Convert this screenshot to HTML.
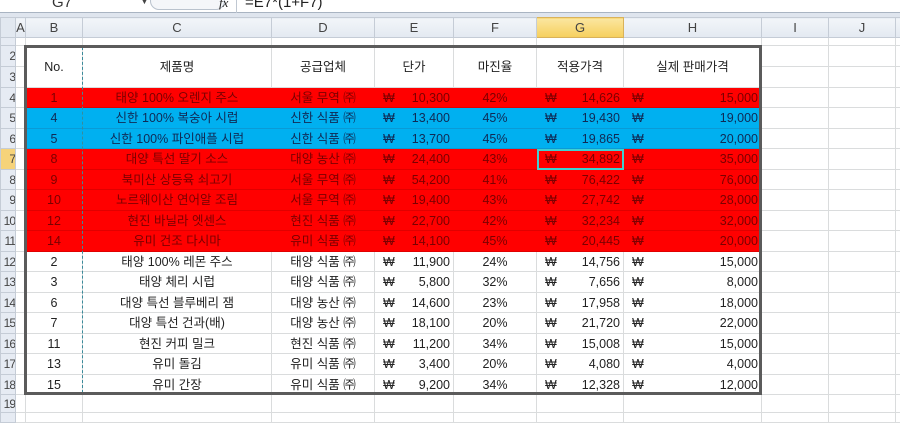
<!DOCTYPE html>
<html><head><meta charset="utf-8"><style>
*{margin:0;padding:0;box-sizing:border-box}
body{width:900px;height:418px;overflow:hidden;background:#fff;position:relative;font-family:"Liberation Sans","Noto Sans CJK KR",sans-serif;font-size:12.5px;color:#222}
.fb{position:absolute;left:0;top:0;width:900px;height:13px;background:#fff;border-bottom:1px solid #a9b4c2}
.band{position:absolute;left:0;top:13px;width:900px;height:4px;background:#dfe5ee}
table{position:absolute;left:0;top:17px;border-collapse:collapse;table-layout:fixed;width:915px}
td{border:1px solid #dadcdd;white-space:nowrap;overflow:hidden;padding:0 3px;line-height:14px}
.ch td{background:linear-gradient(#f2f5f9,#e3e9f1);border-color:#c5ccd6;text-align:center;color:#444;font-size:13px;padding:0}
td.rh{background:#e6ebf3;border-color:#c5ccd6;color:#444;text-align:right;padding:0;font-size:12px;letter-spacing:-1px}
.c{text-align:center}.r{text-align:right}
.red td.d{background:#ff0000;color:#7a0000;border-color:#ff0000;border-bottom-color:#e00000}
.blu td.d{background:#00b0f0;color:#102a55;border-color:#00b0f0;border-bottom-color:#0a9ad6}
.w{float:left;padding-left:5px}
.box{position:absolute;left:24px;top:45px;width:738px;height:350px;border:3px solid #5b5b5b;pointer-events:none}
.dash{position:absolute;left:82px;top:47px;height:346px;border-left:1px dashed #3a8a9a}
</style></head><body>
<div class="fb">
<span style="position:absolute;left:52px;top:-6px;font-size:15px;color:#333">G7</span>
<span style="position:absolute;left:140px;top:-4px;font-size:9px;color:#444">▼</span>
<div style="position:absolute;left:150px;top:-8px;width:75px;height:18px;border:1px solid #b9c2cd;border-radius:9px;background:#f4f6f9"></div>
<span style="position:absolute;left:219px;top:-5px;font-size:13px;font-style:italic;font-family:'Liberation Serif',serif">fx</span>
<div style="position:absolute;left:236px;top:0;height:13px;border-left:1px solid #c0c8d2"></div>
<span style="position:absolute;left:245px;top:-6px;font-size:15px;color:#222">=E7*(1+F7)</span>
</div>
<div class="band"></div>
<table>
<colgroup><col style="width:15px"><col style="width:10px"><col style="width:57px"><col style="width:189px"><col style="width:103px"><col style="width:79px"><col style="width:83px"><col style="width:87px"><col style="width:138px"><col style="width:67px"><col style="width:67px"><col style="width:20px"></colgroup>
<tr class="ch" style="height:20px"><td style="background:#e2e8f0"></td><td>A</td><td>B</td><td>C</td><td>D</td><td>E</td><td>F</td><td style="background:linear-gradient(#fbe6a0,#f6cf5d);border-color:#d9b25a">G</td><td>H</td><td>I</td><td>J</td><td></td></tr>
<tr style="height:8px"><td class="rh"></td><td></td><td></td><td></td><td></td><td></td><td></td><td></td><td></td><td></td><td></td><td></td></tr>
<tr style="height:21px"><td class="rh">2</td><td></td><td rowspan="2" class="c">No.</td><td rowspan="2" class="c">제품명</td><td rowspan="2" class="c">공급업체</td><td rowspan="2" class="c">단가</td><td rowspan="2" class="c">마진율</td><td rowspan="2" class="c">적용가격</td><td rowspan="2" class="c">실제 판매가격</td><td></td><td></td><td></td></tr>
<tr style="height:21px"><td class="rh">3</td><td></td><td></td><td></td><td></td></tr>
<tr class="red" style="height:20px"><td class="rh">4</td><td></td><td class="d c">1</td><td class="d c">태양 100% 오렌지 주스</td><td class="d c">서울 무역 ㈜</td><td class="d r"><span class="w">₩</span>10,300</td><td class="d c">42%</td><td class="d r"><span class="w">₩</span>14,626</td><td class="d r"><span class="w">₩</span>15,000</td><td></td><td></td><td></td></tr>
<tr class="blu" style="height:21px"><td class="rh">5</td><td></td><td class="d c">4</td><td class="d c">신한 100% 복숭아 시럽</td><td class="d c">신한 식품 ㈜</td><td class="d r"><span class="w">₩</span>13,400</td><td class="d c">45%</td><td class="d r"><span class="w">₩</span>19,430</td><td class="d r"><span class="w">₩</span>19,000</td><td></td><td></td><td></td></tr>
<tr class="blu" style="height:20px"><td class="rh">6</td><td></td><td class="d c">5</td><td class="d c">신한 100% 파인애플 시럽</td><td class="d c">신한 식품 ㈜</td><td class="d r"><span class="w">₩</span>13,700</td><td class="d c">45%</td><td class="d r"><span class="w">₩</span>19,865</td><td class="d r"><span class="w">₩</span>20,000</td><td></td><td></td><td></td></tr>
<tr class="red" style="height:21px"><td class="rh" style="background:#f6d37a">7</td><td></td><td class="d c">8</td><td class="d c">대양 특선 딸기 소스</td><td class="d c">대양 농산 ㈜</td><td class="d r"><span class="w">₩</span>24,400</td><td class="d c">43%</td><td class="d r" style="outline:2px solid #40d0d0;outline-offset:-2px"><span class="w">₩</span>34,892</td><td class="d r"><span class="w">₩</span>35,000</td><td></td><td></td><td></td></tr>
<tr class="red" style="height:20px"><td class="rh">8</td><td></td><td class="d c">9</td><td class="d c">북미산 상등육 쇠고기</td><td class="d c">서울 무역 ㈜</td><td class="d r"><span class="w">₩</span>54,200</td><td class="d c">41%</td><td class="d r"><span class="w">₩</span>76,422</td><td class="d r"><span class="w">₩</span>76,000</td><td></td><td></td><td></td></tr>
<tr class="red" style="height:21px"><td class="rh">9</td><td></td><td class="d c">10</td><td class="d c">노르웨이산 연어알 조림</td><td class="d c">서울 무역 ㈜</td><td class="d r"><span class="w">₩</span>19,400</td><td class="d c">43%</td><td class="d r"><span class="w">₩</span>27,742</td><td class="d r"><span class="w">₩</span>28,000</td><td></td><td></td><td></td></tr>
<tr class="red" style="height:20px"><td class="rh">10</td><td></td><td class="d c">12</td><td class="d c">현진 바닐라 엣센스</td><td class="d c">현진 식품 ㈜</td><td class="d r"><span class="w">₩</span>22,700</td><td class="d c">42%</td><td class="d r"><span class="w">₩</span>32,234</td><td class="d r"><span class="w">₩</span>32,000</td><td></td><td></td><td></td></tr>
<tr class="red" style="height:21px"><td class="rh">11</td><td></td><td class="d c">14</td><td class="d c">유미 건조 다시마</td><td class="d c">유미 식품 ㈜</td><td class="d r"><span class="w">₩</span>14,100</td><td class="d c">45%</td><td class="d r"><span class="w">₩</span>20,445</td><td class="d r"><span class="w">₩</span>20,000</td><td></td><td></td><td></td></tr>
<tr style="height:20px"><td class="rh">12</td><td></td><td class="c">2</td><td class="c">태양 100% 레몬 주스</td><td class="c">태양 식품 ㈜</td><td class="r"><span class="w">₩</span>11,900</td><td class="c">24%</td><td class="r"><span class="w">₩</span>14,756</td><td class="r"><span class="w">₩</span>15,000</td><td></td><td></td><td></td></tr>
<tr style="height:21px"><td class="rh">13</td><td></td><td class="c">3</td><td class="c">태양 체리 시럽</td><td class="c">태양 식품 ㈜</td><td class="r"><span class="w">₩</span>5,800</td><td class="c">32%</td><td class="r"><span class="w">₩</span>7,656</td><td class="r"><span class="w">₩</span>8,000</td><td></td><td></td><td></td></tr>
<tr style="height:20px"><td class="rh">14</td><td></td><td class="c">6</td><td class="c">대양 특선 블루베리 잼</td><td class="c">대양 농산 ㈜</td><td class="r"><span class="w">₩</span>14,600</td><td class="c">23%</td><td class="r"><span class="w">₩</span>17,958</td><td class="r"><span class="w">₩</span>18,000</td><td></td><td></td><td></td></tr>
<tr style="height:21px"><td class="rh">15</td><td></td><td class="c">7</td><td class="c">대양 특선 건과(배)</td><td class="c">대양 농산 ㈜</td><td class="r"><span class="w">₩</span>18,100</td><td class="c">20%</td><td class="r"><span class="w">₩</span>21,720</td><td class="r"><span class="w">₩</span>22,000</td><td></td><td></td><td></td></tr>
<tr style="height:20px"><td class="rh">16</td><td></td><td class="c">11</td><td class="c">현진 커피 밀크</td><td class="c">현진 식품 ㈜</td><td class="r"><span class="w">₩</span>11,200</td><td class="c">34%</td><td class="r"><span class="w">₩</span>15,008</td><td class="r"><span class="w">₩</span>15,000</td><td></td><td></td><td></td></tr>
<tr style="height:21px"><td class="rh">17</td><td></td><td class="c">13</td><td class="c">유미 돌김</td><td class="c">유미 식품 ㈜</td><td class="r"><span class="w">₩</span>3,400</td><td class="c">20%</td><td class="r"><span class="w">₩</span>4,080</td><td class="r"><span class="w">₩</span>4,000</td><td></td><td></td><td></td></tr>
<tr style="height:20px"><td class="rh">18</td><td></td><td class="c">15</td><td class="c">유미 간장</td><td class="c">유미 식품 ㈜</td><td class="r"><span class="w">₩</span>9,200</td><td class="c">34%</td><td class="r"><span class="w">₩</span>12,328</td><td class="r"><span class="w">₩</span>12,000</td><td></td><td></td><td></td></tr>
<tr style="height:18px"><td class="rh">19</td><td></td><td></td><td></td><td></td><td></td><td></td><td></td><td></td><td></td><td></td><td></td></tr>
<tr style="height:10px"><td class="rh"></td><td></td><td></td><td></td><td></td><td></td><td></td><td></td><td></td><td></td><td></td><td></td></tr>
</table>
<div class="dash"></div>
<div class="box"></div>
</body></html>
